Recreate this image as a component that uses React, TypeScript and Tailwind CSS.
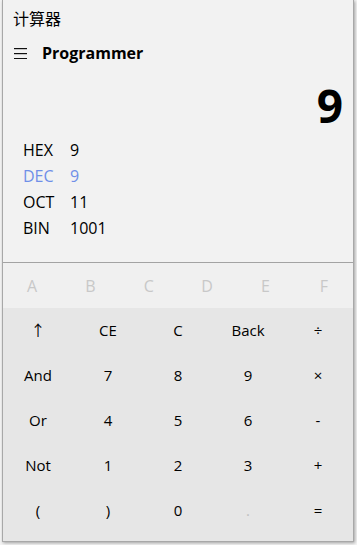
import React from "react";

const font = { fontFamily: '"Open Sans", "Noto Sans", "Noto Sans CJK SC", sans-serif' };

export default function App() {
  const hex = ["A", "B", "C", "D", "E", "F"];
  const keys: [string, boolean][] = [
    ["↑", false], ["CE", false], ["C", false], ["Back", false], ["÷", false],
    ["And", false], ["7", false], ["8", false], ["9", false], ["×", false],
    ["Or", false], ["4", false], ["5", false], ["6", false], ["-", false],
    ["Not", false], ["1", false], ["2", false], ["3", false], ["+", false],
    ["(", false], [")", false], ["0", false], [".", true], ["=", false],
  ];
  const rows: [string, string, boolean][] = [
    ["HEX", "9", false],
    ["DEC", "9", true],
    ["OCT", "11", false],
    ["BIN", "1001", false],
  ];
  return (
    <div className="w-[357px] h-[545px] bg-[#f4f4f4] overflow-hidden" style={font}>
      <div className="ml-[2px] w-[352px] h-[542px] border-l border-r border-b border-[#a8a8a8] bg-[#f2f2f2] flex flex-col shadow-[1px_1px_3px_rgba(0,0,0,0.35)]">
        <div className="h-[35px] pl-[10px] flex items-center text-[16px] text-black" style={{ fontFamily: '"Noto Sans CJK SC", sans-serif' }}>
          计算器
        </div>
        <div className="h-[36px] flex items-center pl-[11px]">
          <svg width="13" height="11" viewBox="0 0 13 11" className="mr-[15px]">
            <rect x="0" y="0" width="13" height="1.2" fill="#111" />
            <rect x="0" y="5" width="13" height="1.2" fill="#111" />
            <rect x="0" y="10" width="13" height="1.2" fill="#111" />
          </svg>
          <span className="text-[16px] font-bold text-black">Programmer</span>
        </div>
        <div className="h-[66px] pt-[2px] flex items-center justify-end pr-[10px]">
          <span className="text-[46px] font-bold leading-none text-black">9</span>
        </div>
        <div className="flex flex-col pl-[20px] text-[16px]">
          {rows.map(([l, v, active]) => (
            <div key={l} className={`h-[26px] flex items-center ${active ? "text-[#6f8fe8]" : "text-black"}`}>
              <span className="w-[47px]">{l}</span>
              <span>{v}</span>
            </div>
          ))}
        </div>
        <div className="h-[21px]" />
        <div className="h-[1px] bg-[#a3a3a3]" />
        <div className="h-[45px] grid grid-cols-6 bg-[#f0f0f0] text-[16px] text-[#c8c8c8]">
          {hex.map((h) => (
            <div key={h} className="flex items-center justify-center">{h}</div>
          ))}
        </div>
        <div className="flex-1 bg-[#e6e6e6] grid grid-cols-5 grid-rows-[repeat(5,45px)] content-start text-[15px]">
          {keys.map(([k, dis], i) => (
            <div key={i} className={`flex items-center justify-center ${dis ? "text-[#c0c0c0]" : "text-black"}`}>{k}</div>
          ))}
        </div>
      </div>
    </div>
  );
}
